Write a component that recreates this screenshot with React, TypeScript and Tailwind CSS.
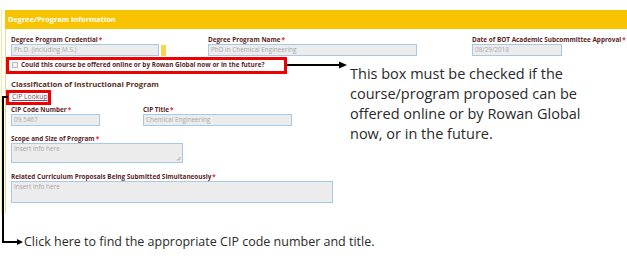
import React from 'react';

const labelCls =
  "h-[9px] leading-[9px] text-[6.4px] font-bold text-[#5b1f1f] whitespace-nowrap";
const inputCls =
  "h-[12px] bg-[#ececec] border border-[#a9c8e6] text-[6.4px] leading-[10px] pl-[2px] text-[#a8a8a8] whitespace-nowrap overflow-hidden";

const Req = () => <span className="text-[#e02424] ml-[1px]">*</span>;

const App = () => {
  return (
    <div
      className="relative w-[627px] h-[263px] bg-white overflow-hidden"
      style={{ fontFamily: '"Open Sans", "Noto Sans", sans-serif' }}
    >
      {/* faint outer edge */}
      <div className="absolute left-[1px] top-[9px] w-[1px] h-[205px] bg-[#fbe7ae]" />

      <div className="pt-[10px]">
        <div className="ml-[5px] h-[19px] bg-[#f8c300] flex items-center pl-[3px]">
          <span className="text-white font-bold text-[7.4px]">
            Degree/Program Information
          </span>
        </div>

        <div className="ml-[5px] border-l border-[#f5d98a] pl-[5px] pb-[10px]">
          {/* row 1 */}
          <div className="flex pt-[6px]">
            <div className="w-[197px] shrink-0">
              <div className={labelCls}>
                Degree Program Credential<Req />
              </div>
              <div className="flex items-center">
                <div className={`${inputCls} w-[148px]`}>Ph.D. (including M.S.)</div>
                <div className="ml-[2px] w-[5px] h-[11px] bg-[#f7d54c]" />
              </div>
            </div>
            <div className="w-[264px] shrink-0">
              <div className={labelCls}>
                Degree Program Name<Req />
              </div>
              <div className={`${inputCls} w-[209px]`}>PhD in Chemical Engineering</div>
            </div>
            <div className="shrink-0">
              <div className={labelCls}>
                Date of BOT Academic Subcommittee Approval<Req />
              </div>
              <div className={`${inputCls} w-[90px]`}>08/29/2018</div>
            </div>
          </div>

          {/* checkbox row */}
          <div className="relative mt-[2px] h-[14px] flex items-center">
            <span className="w-[6px] h-[6px] border border-[#b5b5b5] bg-[#f4f4f4] ml-[1px]" />
            <span className="ml-[3px] text-[6.4px] font-bold text-[#5b1f1f] whitespace-nowrap">
              Could this course be offered online or by Rowan Global now or in the future?
            </span>
            <div className="absolute left-[-5px] top-[-1px] w-[281px] h-[17px] border-[3px] border-[#ee0000]" />
          </div>

          <div className="mt-[7px] h-[10px] leading-[10px] text-[7.7px] font-bold text-[#5a3326] whitespace-nowrap">
            Classification of Instructional Program
          </div>

          <div className="relative mt-[1px] h-[15px] w-[45px] pl-[1px] flex items-center">
            <span className="text-[6.8px] text-[#7b4a63] underline">CIP Lookup</span>
            <div className="absolute left-[-5px] top-0 w-[45px] h-[15px] border-[3px] border-[#ee0000]" />
          </div>

          {/* CIP row */}
          <div className="flex">
            <div className="w-[132px] shrink-0">
              <div className={labelCls}>
                CIP Code Number<Req />
              </div>
              <div className={`${inputCls} w-[89px]`}>09.5467</div>
            </div>
            <div className="shrink-0">
              <div className={labelCls}>
                CIP Title<Req />
              </div>
              <div className={`${inputCls} w-[149px]`}>Chemical Engineering</div>
            </div>
          </div>

          <div className={`${labelCls} mt-[8px]`}>
            Scope and Size of Program<Req />
          </div>
          <div className={`${inputCls} relative w-[172px] h-[20px]`}>
            Insert info here
            <svg className="absolute right-[1px] bottom-[1px]" width="5" height="5" viewBox="0 0 5 5">
              <path d="M4.5 1 L1 4.5 M4.5 3 L3 4.5" stroke="#888" strokeWidth="0.7" />
            </svg>
          </div>

          <div className={`${labelCls} mt-[9px]`}>
            Related Curriculum Proposals Being Submitted Simultaneously<Req />
          </div>
          <div className={`${inputCls} w-[322px] h-[22px]`}>Insert info here</div>
        </div>
      </div>

      {/* annotation: checkbox arrow */}
      <svg className="absolute left-[287px] top-[60px]" width="62" height="10" viewBox="0 0 62 10">
        <line x1="0" y1="5" x2="54" y2="5" stroke="#000" strokeWidth="2" />
        <path d="M52 1.5 L60 5 L52 8.5 Z" fill="#000" />
      </svg>
      <div className="absolute left-[350px] top-[64px] text-[14.5px] leading-[20px] text-[#2a2a2a] whitespace-nowrap">
        <div>This box must be checked if the</div>
        <div>course/program proposed can be</div>
        <div>offered online or by Rowan Global</div>
        <div>now, or in the future.</div>
      </div>

      {/* annotation: CIP lookup connector */}
      <svg className="absolute left-0 top-[90px]" width="26" height="160" viewBox="0 0 26 160">
        <path d="M8 7 H3 V152 H18" stroke="#000" strokeWidth="2" fill="none" />
        <path d="M17 149 L23 152 L17 155 Z" fill="#000" />
      </svg>
      <div className="absolute left-[24px] top-[234px] text-[12.5px] leading-[16px] text-[#2a2a2a] whitespace-nowrap">
        Click here to find the appropriate CIP code number and title.
      </div>
    </div>
  );
};

export default App;
